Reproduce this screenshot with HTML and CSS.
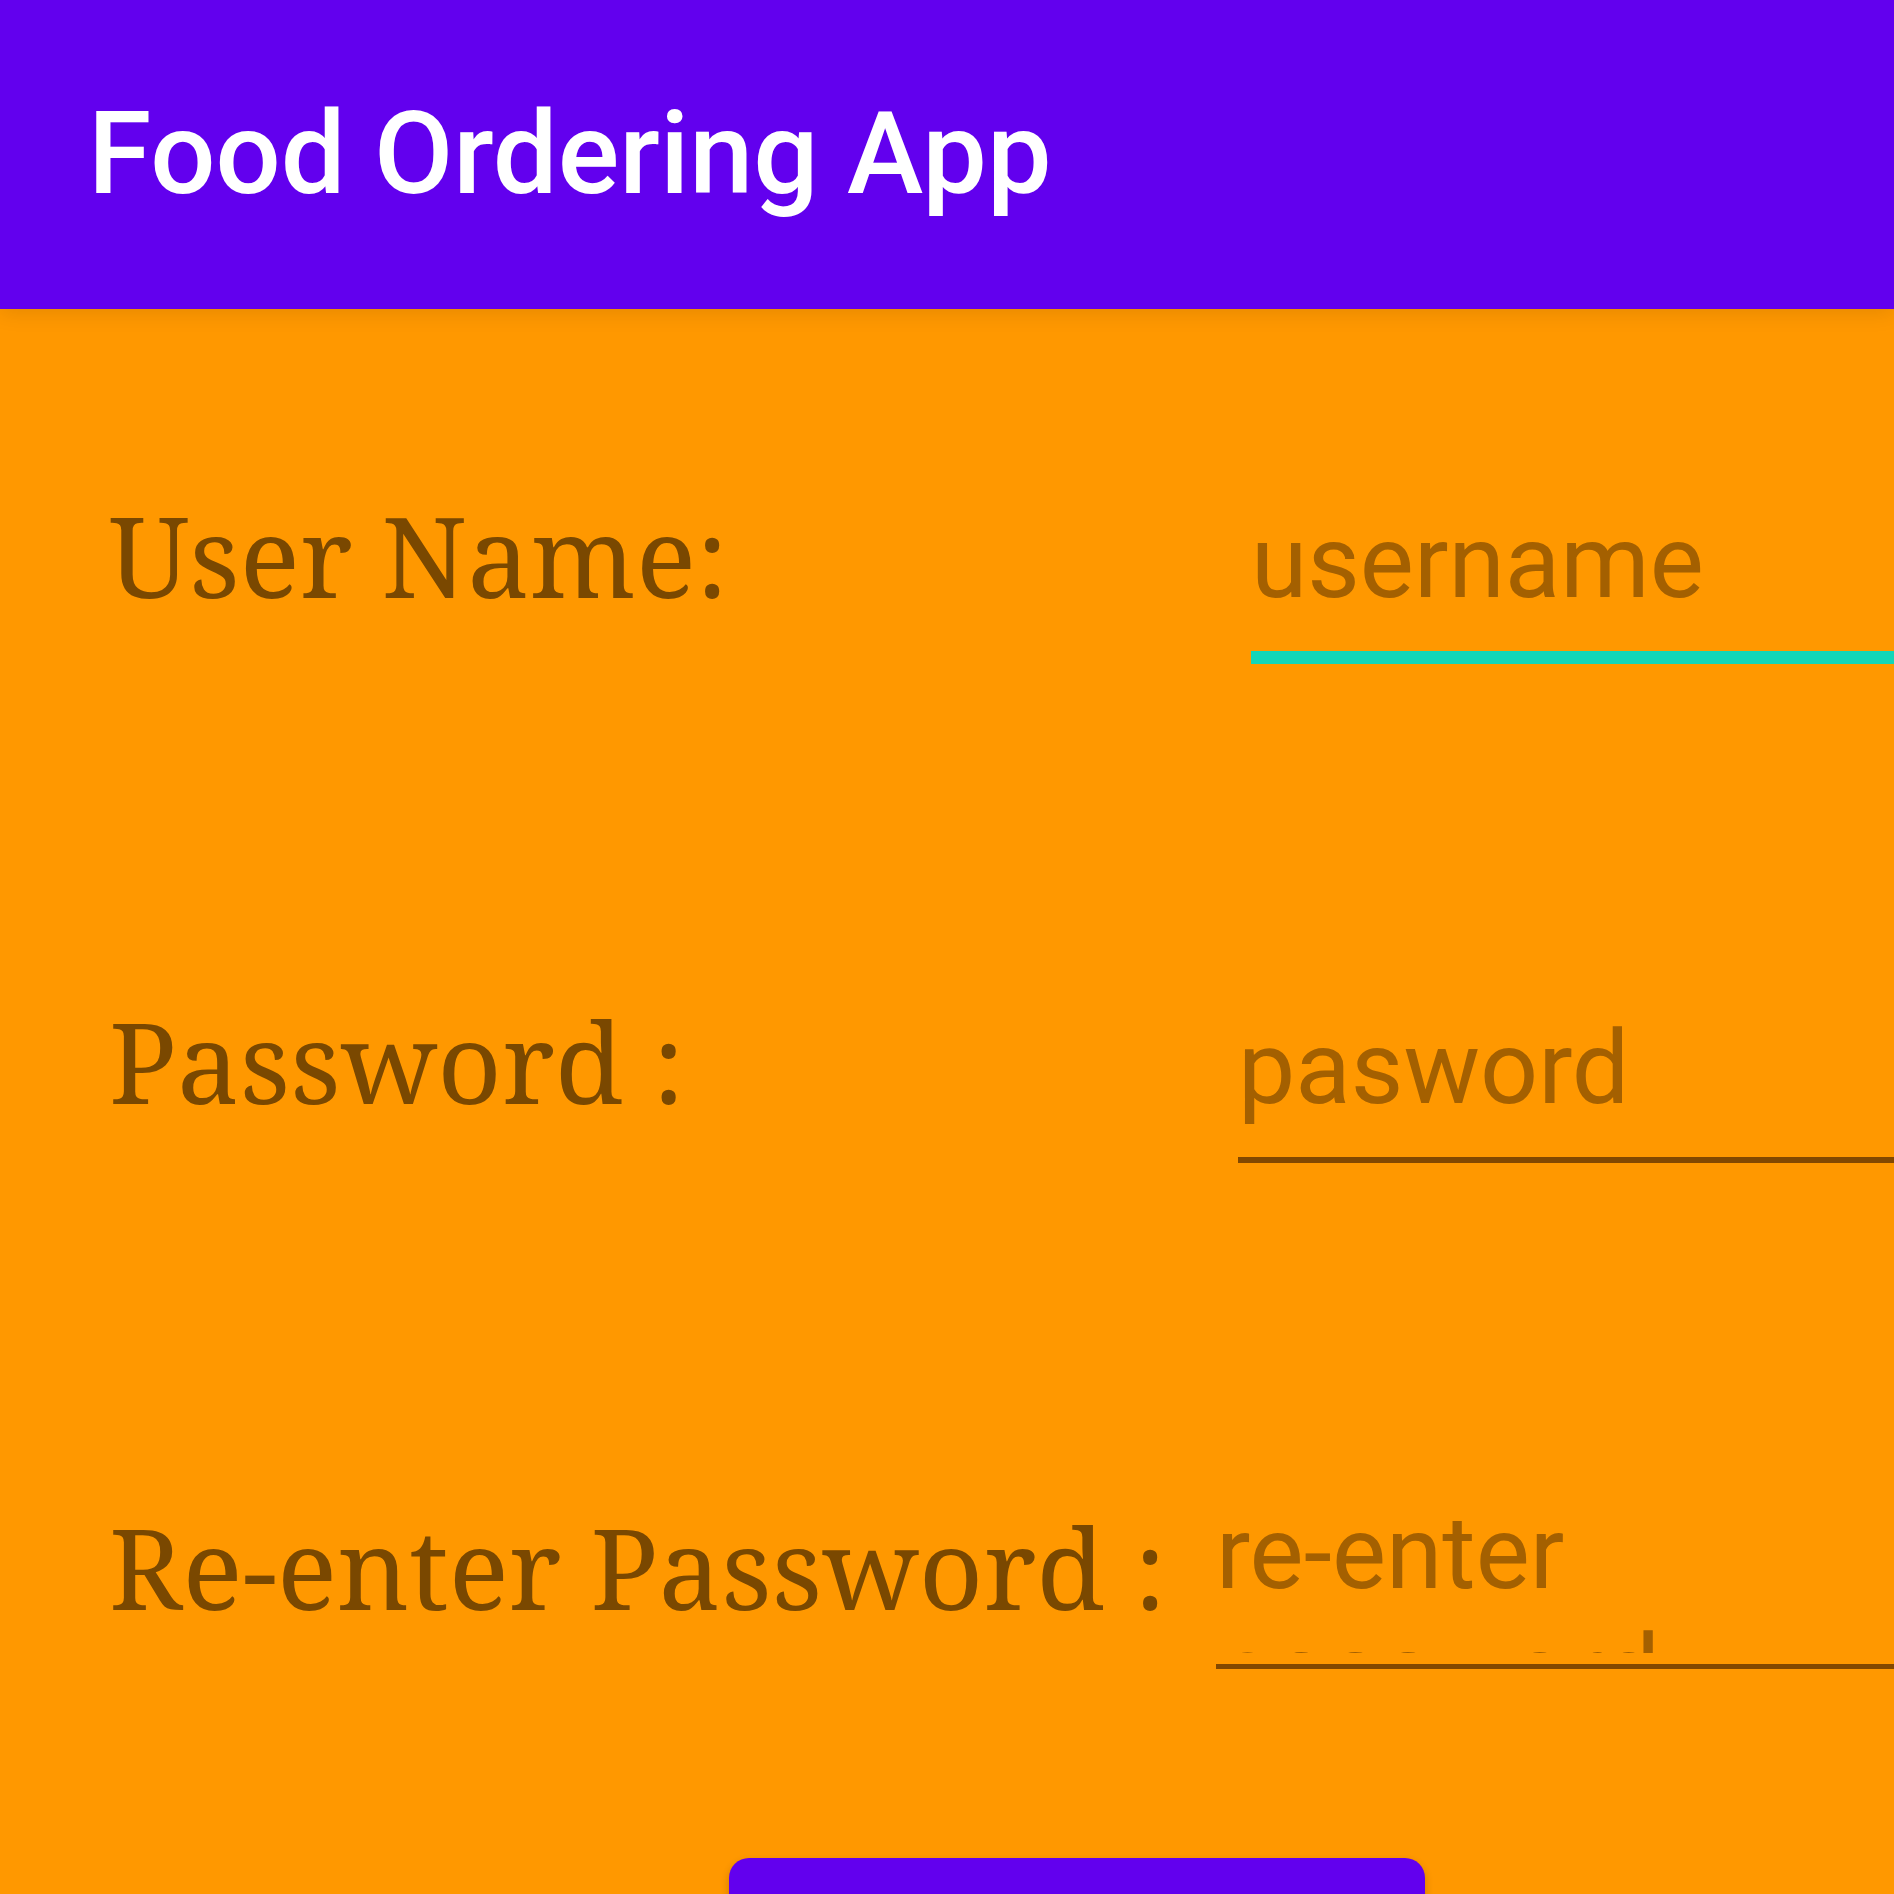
FILE: index.html
```html
<!DOCTYPE html>
<html lang="en">
<head>
<meta charset="utf-8">
<title>Food Ordering App</title>
<link rel="stylesheet" href="styles.css">
</head>
<body>
<header class="app-bar"><h1 class="app-title">Food Ordering App</h1></header>
<main class="page">
<form class="form">
<div class="rows">
<div class="row">
<label class="label" for="username">User Name:</label>
<input class="field field-active" id="username" type="text" placeholder="username">
</div>
<div class="row">
<label class="label" for="password">Password :</label>
<input class="field field-password" id="password" type="text" placeholder="pasword">
</div>
<div class="row">
<label class="label" for="confirm">Re-enter Password :</label>
<div class="field-multiline"><textarea class="multiline-input" id="confirm" placeholder="re-enter password"></textarea></div>
</div>
</div>
<button class="submit" type="button" aria-label="Register"></button>
</form>
</main>
</body>
</html>
```
FILE: styles.css
```css
* { box-sizing: border-box; }

body {
  display: flex;
  flex-direction: column;
  height: 100vh;
  margin: 0;
  overflow: hidden;
  background: #ff9800;
  font-family: Roboto, sans-serif;
}

.app-bar {
  flex: none;
  padding: 88px 88px 89px;
  background: #6200ee;
  box-shadow: 0 4px 20px rgba(0, 0, 0, 0.1);
}

.app-title {
  margin: 0;
  color: #fff;
  font-size: 115px;
  line-height: 132px;
  font-weight: 500;
  white-space: nowrap;
}

.page {
  flex: 1;
  min-height: 0;
  padding-top: 173px;
  overflow: hidden;
}

.form {
  display: flex;
  flex-direction: column;
  gap: 182px;
}

.rows {
  display: flex;
  flex-direction: column;
  gap: 324px;
}

.row {
  display: grid;
  grid-template-columns: 1107px 1fr;
  align-items: start;
  min-height: 182px;
  padding-left: 109px;
}

.label {
  padding-top: 7px;
  color: #7a4800;
  font-family: "Noto Serif", "Noto Sans", serif;
  font-size: 112px;
  line-height: 132px;
  white-space: nowrap;
}

.field,
.multiline-input {
  min-width: 0;
  border: 0;
  border-radius: 0;
  outline: 0;
  background: transparent;
  color: #7a4800;
  font: 400 102px/119px Roboto, sans-serif;
}

.field {
  padding: 21px 0 29px;
  border-bottom: 6px solid #824800;
}

.field-active {
  margin-left: 35px;
  border-bottom: 13px solid #12d6b8;
}

.field-password { margin-left: 22px; }

.field-multiline {
  padding-bottom: 11px;
  border-bottom: 5px solid #824800;
}

.multiline-input {
  display: block;
  width: 100%;
  height: 159px;
  padding: 0;
  overflow: hidden;
  resize: none;
}

.field::placeholder,
.multiline-input::placeholder {
  color: #a46000;
  opacity: 1;
}

.submit {
  width: 696px;
  height: 160px;
  margin-left: 729px;
  border: 0;
  border-radius: 20px;
  background: #6200ee;
  box-shadow: 0 4px 8px rgba(0, 0, 0, 0.2);
}
```
